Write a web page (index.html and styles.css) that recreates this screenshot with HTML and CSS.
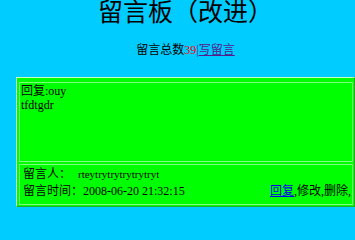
FILE: index.html
```html
<!DOCTYPE html>
<html lang="zh">
<head>
<meta charset="utf-8">
<title>留言板（改进）</title>
<link rel="stylesheet" href="styles.css">
</head>
<body>
<div class="page">
  <h1 class="title">留言板（改进）</h1>
  <p class="summary">留言总数<span class="count">39</span><span class="sep">|</span><a class="write" href="#">写留言</a></p>
  <div class="board">
    <div class="cell body-cell">
      <div class="line">回复:ouy</div>
      <div class="line">tfdtgdr</div>
    </div>
    <div class="cell meta-cell">
      <div class="meta-row">留言人：<span class="author">rteytrytrytrytrytryt</span></div>
      <div class="meta-row split">
        <span>留言时间：2008-06-20 21:32:15</span>
        <span class="actions"><a class="reply" href="#">回复</a>,修改,删除,</span>
      </div>
    </div>
  </div>
</div>
</body>
</html>
```
FILE: styles.css
```css
body {
  margin: 0;
  background: #00ccff;
  font-family: "Liberation Serif", "Noto Sans CJK SC", serif;
  color: #000;
}
.page {
  margin-left: 16px;
  width: 339px;
}
.title {
  margin: 0;
  font-size: 25px;
  font-weight: normal;
  line-height: 26px;
  text-align: center;
}
.summary {
  margin: 17px 0 0 0;
  font-size: 12px;
  line-height: 14px;
  text-align: center;
}
.count {
  color: #ff0000;
}
.sep {
  color: #551a8b;
}
.write {
  color: #551a8b;
  text-decoration: underline;
}
.board {
  margin-top: 20px;
  background: #00ff00;
  border: 1px solid;
  border-color: #c8ffc8 #20b020 #20b020 #c8ffc8;
  padding: 4px 1px 1px 2px;
  display: flex;
  flex-direction: column;
  gap: 2px;
}
.cell {
  border: 1px solid #80ff80;
  font-size: 12px;
}
.body-cell {
  height: 77px;
  padding: 1px 1px 0 1px;
  line-height: 14px;
}
.meta-cell {
  height: 38px;
  padding: 1px 1px 0 3px;
  line-height: 17px;
}
.author {
  font-size: 11px;
  margin-left: 7px;
}
.split {
  display: flex;
  justify-content: space-between;
}
.reply {
  color: #0000ee;
  text-decoration: underline;
}
```
